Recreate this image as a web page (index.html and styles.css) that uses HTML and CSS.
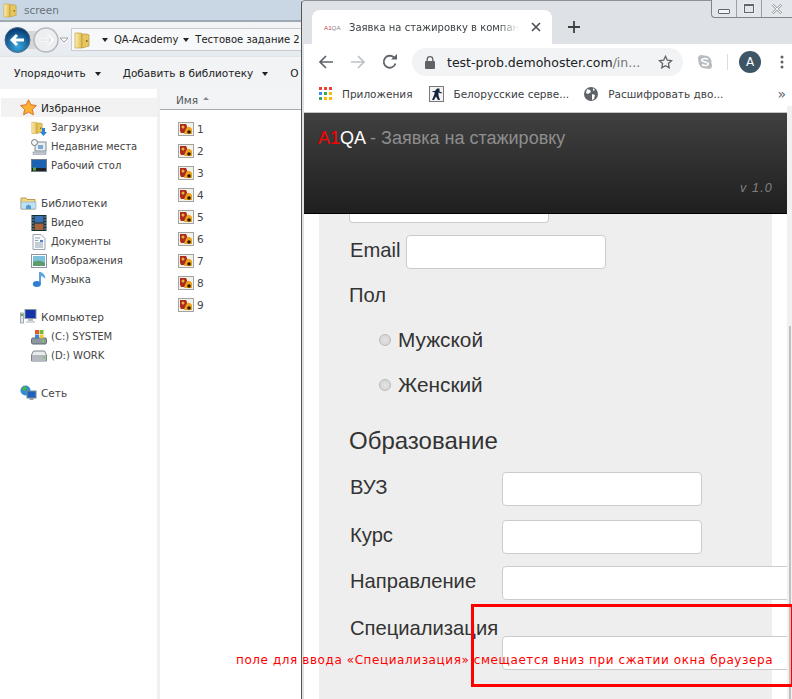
FILE: index.html
```html
<!DOCTYPE html>
<html lang="ru">
<head>
    <meta charset="UTF-8">
    <meta name="viewport" content="width=device-width, initial-scale=1.0">
    <title>Заявка на стажировку</title>
    <link rel="stylesheet" href="styles.css">
</head>
<body>

    <svg class="defs" width="0" height="0">
        <defs>
            <linearGradient id="folderFill" x1="0" y1="0" x2="1" y2="0">
                <stop offset="0" stop-color="#fdf0b0"/>
                <stop offset="1" stop-color="#dfb94f"/>
            </linearGradient>
            <symbol id="folder" viewBox="0 0 16 18">
                <path d="M1 2h6l1 1v14H1z" fill="url(#folderFill)" stroke="#c9a445" stroke-width=".7"/>
                <path d="M8 3h5l2 1v11l-7 2z" fill="#e8c65f" stroke="#b8953b" stroke-width=".7"/>
                <rect x="12" y="9" width="1.5" height="2" fill="#8a6d1f"/>
            </symbol>
            <symbol id="picfile" viewBox="0 0 16 14">
                <rect x=".5" y=".5" width="15" height="13" fill="#f1f1e8" stroke="#a3a3a3"/>
                <path d="M2 2h6l1 2v5l-3 2H3l-1-2z" fill="#b02a1c"/>
                <circle cx="5" cy="5" r="1.500" fill="#e8b23c"/>
                <path d="M9 5h3l2 2v5H6l1-3z" fill="#eba21f"/>
                <circle cx="11" cy="10" r="1.800" fill="#2c1b08"/>
            </symbol>
        </defs>
    </svg>

    <!-- Проводник -->
    <div class="explorer">
        <div class="ex-title">
            <svg width="14" height="16"><use href="#folder"/></svg>
            <span>screen</span>
        </div>
        <div class="ex-nav">
            <svg class="nav-btns" width="68" height="30" viewBox="0 0 68 30">
                <defs>
                    <radialGradient id="backFill" cx=".5" cy=".75" r=".7">
                        <stop offset="0" stop-color="#39a9e0"/>
                        <stop offset="1" stop-color="#06396f"/>
                    </radialGradient>
                </defs>
                <rect x="14" y="6" width="30" height="18" fill="#d5d7da"/>
                <circle cx="17.500" cy="15" r="12.500" fill="url(#backFill)" stroke="#4d6b8a"/>
                <path d="M24 15H12M17 10l-5 5 5 5" fill="none" stroke="#fff" stroke-width="3"/>
                <circle cx="46" cy="15" r="12" fill="#eceef0" stroke="#b4b8bc" stroke-width="1.500"/>
                <path d="M39.500 15H52M47.500 10.500L52 15l-4.500 4.500" fill="none" stroke="#fff" stroke-width="3"/>
                <path d="M39.500 15H51M47.500 11L51 15l-3.500 4" fill="none" stroke="#c8ccd0" stroke-width=".8"/>
                <path d="M60 13h8l-4 4z" fill="#fff" stroke="#8d8d8d" stroke-width=".8"/>
            </svg>
            <div class="ex-address">
                <svg width="16" height="18"><use href="#folder"/></svg>
                <span class="crumb-arrow first"></span>
                <span>QA-Academy</span>
                <span class="crumb-arrow"></span>
                <span>Тестовое задание 2</span>
            </div>
        </div>
        <div class="ex-tools">
            <span class="tool">Упорядочить<i class="crumb-arrow"></i></span>
            <span class="tool">Добавить в библиотеку<i class="crumb-arrow"></i></span>
            <span class="tool">О</span>
        </div>
        <div class="ex-main">
            <div class="ex-side">
                <div class="side-group">
                    <div class="side-row head active">
                        <svg width="17" height="17" viewBox="0 0 17 17"><path d="M8.500 .8l2.400 5 5.500.7-4 3.800 1 5.500-4.900-2.700-4.900 2.700 1-5.500-4-3.800 5.500-.7z" fill="#f9b233" stroke="#d9702a"/></svg>
                        Избранное
                    </div>
                    <div class="side-row">
                        <svg width="16" height="16" viewBox="0 0 16 16"><use href="#folder" width="12" height="15"/><path d="M11 8h3v4h2l-3.500 4L9 12h2z" fill="#2b83d8"/></svg>
                        Загрузки
                    </div>
                    <div class="side-row">
                        <svg width="16" height="16" viewBox="0 0 16 16"><rect x="4" y="3" width="11" height="9" fill="#e8edf2" stroke="#7d8a96"/><rect x="7" y="6" width="5" height="4" fill="#7fa7d1"/><circle cx="3.500" cy="3.500" r="3" fill="#f5f5f5" stroke="#777"/><rect x="2" y="13" width="13" height="2.500" fill="#c5ccd3" stroke="#7d8a96" stroke-width=".5"/></svg>
                        Недавние места
                    </div>
                    <div class="side-row">
                        <svg width="16" height="16" viewBox="0 0 16 16"><rect x=".5" y="1.500" width="15" height="12" fill="#1c62b3" stroke="#6f7f8e"/><rect x="1" y="10" width="14" height="3" fill="#222"/><rect x="2" y="9.500" width="3" height="3" fill="#57a845"/></svg>
                        Рабочий стол
                    </div>
                </div>
                <div class="side-group">
                    <div class="side-row head">
                        <svg width="17" height="16" viewBox="0 0 17 16"><path d="M1 3h5l1 1.500h8V14H1z" fill="#f1d785" stroke="#b89a48"/><path d="M1 7h15v7H1z" fill="#bfe0f3" stroke="#8aa9bf" stroke-width=".6"/><path d="M6 14v-3l2.500-1.500L11 11v3z" fill="#4f9ad4"/></svg>
                        Библиотеки
                    </div>
                    <div class="side-row">
                        <svg width="16" height="16" viewBox="0 0 15 16"><rect width="15" height="16" fill="#10303a"/><rect x="3" y="1" width="9" height="6.500" fill="#3a72b5"/><rect x="3" y="8.500" width="9" height="6.500" fill="#a9633a"/><path d="M1 2h1M1 5h1M1 8h1M1 11h1M1 14h1M13 2h1M13 5h1M13 8h1M13 11h1M13 14h1" stroke="#fff"/></svg>
                        Видео
                    </div>
                    <div class="side-row">
                        <svg width="16" height="16" viewBox="-1 0 16 16"><path d="M1 .5h8l4 4v11H1z" fill="#f8f9fb" stroke="#9aa3ad"/><path d="M3 4h5M3 6.500h3M3 9h8M3 11h8M3 13h8" stroke="#8fa0b2"/><rect x="8" y="6" width="3" height="2" fill="#4a86c5"/></svg>
                        Документы
                    </div>
                    <div class="side-row">
                        <svg width="16" height="14" viewBox="0 0 16 14"><rect x=".5" y=".5" width="15" height="13" fill="#fff" stroke="#8c97a1"/><rect x="2" y="2" width="12" height="10" fill="#7cc0dd"/><path d="M2 12V8q6-3 12 1v3z" fill="#5d9c6c"/></svg>
                        Изображения
                    </div>
                    <div class="side-row">
                        <svg width="16" height="17" viewBox="-1 0 16 17"><path d="M8 1v12" stroke="#2f7fd0" stroke-width="1.500"/><ellipse cx="4.800" cy="13" rx="4" ry="3" fill="#2f7fd0"/><path d="M8 1q5 1 5.500 7Q11 5 8 5z" fill="#5aa7e6"/></svg>
                        Музыка
                    </div>
                </div>
                <div class="side-group">
                    <div class="side-row head">
                        <svg width="17" height="15" viewBox="0 0 17 15"><rect x="5" y=".5" width="11" height="9" fill="#1433a8" stroke="#8c97a1"/><rect x="8" y="10" width="5" height="2" fill="#b7bdc3"/><rect x="6" y="12" width="9" height="2" fill="#d5d9dd"/><rect x=".5" y="4" width="3" height="10" fill="#e4e7ea" stroke="#7f8a94" stroke-width=".7"/><rect x="1" y="5" width="2" height="2" fill="#55b04a"/></svg>
                        Компьютер
                    </div>
                    <div class="side-row">
                        <svg width="16" height="16" viewBox="0 0 16 16"><rect x=".5" y="9" width="15" height="6" rx="1.500" fill="#8d979f" stroke="#5e6871"/><rect x="11" y="11" width="2" height="2" fill="#6fd04c"/><rect x="4" y="1" width="4" height="4" fill="#e4572e"/><rect x="8.500" y="1" width="4" height="4" fill="#79b63a"/><rect x="4" y="5.500" width="4" height="4" fill="#3b85d8"/><rect x="8.500" y="5.500" width="4" height="4" fill="#f2c230"/></svg>
                        (C:) SYSTEM
                    </div>
                    <div class="side-row">
                        <svg width="16" height="12" viewBox="0 0 16 12"><path d="M2.500 1h11l2 4v6H.5V5z" fill="#e9ebed" stroke="#7b848c"/><rect x="1" y="5" width="14" height="5.500" fill="#b3b9bf"/><rect x="12" y="6.500" width="2" height="2" fill="#6fd04c"/></svg>
                        (D:) WORK
                    </div>
                </div>
                <div class="side-group">
                    <div class="side-row head">
                        <svg width="17" height="16" viewBox="0 0 17 16"><circle cx="5.500" cy="5.500" r="5" fill="#2f8fd6"/><path d="M2 3l3-2 2 2-2 3-3-1zM6 8l2-1 1 2-2 2z" fill="#4fb044"/><rect x="7" y="6" width="9" height="7" fill="#1f62c0" stroke="#7b8791"/><rect x="9.500" y="13" width="4" height="2" fill="#9aa3ab"/></svg>
                        Сеть
                    </div>
                </div>
            </div>
            <div class="ex-list">
                <div class="list-head">Имя<i class="sort-up"></i></div>
                <div class="files">
                    <div class="file"><svg width="16" height="14"><use href="#picfile"/></svg>1</div>
                    <div class="file"><svg width="16" height="14"><use href="#picfile"/></svg>2</div>
                    <div class="file"><svg width="16" height="14"><use href="#picfile"/></svg>3</div>
                    <div class="file"><svg width="16" height="14"><use href="#picfile"/></svg>4</div>
                    <div class="file"><svg width="16" height="14"><use href="#picfile"/></svg>5</div>
                    <div class="file"><svg width="16" height="14"><use href="#picfile"/></svg>6</div>
                    <div class="file"><svg width="16" height="14"><use href="#picfile"/></svg>7</div>
                    <div class="file"><svg width="16" height="14"><use href="#picfile"/></svg>8</div>
                    <div class="file"><svg width="16" height="14"><use href="#picfile"/></svg>9</div>
                </div>
            </div>
        </div>
    </div>

    <!-- Браузер -->
    <div class="browser">
        <div class="win-ctrls">
            <span class="win-btn"><i class="win-min"></i></span>
            <span class="win-btn"><i class="win-max"></i></span>
            <span class="win-btn close">
                <svg width="12" height="10" viewBox="0 0 12 10"><path d="M1.500 .5L10.500 9.500M10.500 .5L1.500 9.500" stroke="#a9adb2" stroke-width="2.500"/><path d="M1.500 .5L10.500 9.500M10.500 .5L1.500 9.500" stroke="#f4f5f6" stroke-width="1"/></svg>
            </span>
        </div>
        <div class="tabstrip">
            <div class="tab">
                <span class="favicon"><b>A1</b>QA</span>
                <span class="tab-title"><span class="tab-text">Заявка на стажировку в компан</span></span>
                <svg width="10" height="10" viewBox="0 0 10 10"><path d="M1 1l8 8M9 1l-8 8" stroke="#4a4d51" stroke-width="1.600"/></svg>
            </div>
            <svg class="newtab" width="12" height="12" viewBox="0 0 12 12"><path d="M6 0v12M0 6h12" stroke="#3c4043" stroke-width="1.800"/></svg>
        </div>
        <div class="toolbar">
            <svg width="16" height="14" viewBox="0 0 16 14"><path d="M15 7H2M8 1L2 7l6 6" fill="none" stroke="#5f6368" stroke-width="1.700"/></svg>
            <svg width="16" height="14" viewBox="0 0 16 14"><path d="M1 7h13M8 1l6 6-6 6" fill="none" stroke="#bdc1c6" stroke-width="1.700"/></svg>
            <svg width="16" height="16" viewBox="0 0 16 16"><path d="M13.500 9.500A6 6 0 1 1 12 3.500" fill="none" stroke="#5f6368" stroke-width="1.800"/><path d="M9 5.500h6v-5.500z" fill="#5f6368"/></svg>
            <div class="omnibox">
                <svg width="10" height="13" viewBox="0 0 10 13"><rect y="5" width="10" height="8" rx="1" fill="#5f6368"/><path d="M2.200 5V3.500a2.800 2.800 0 0 1 5.600 0V5" fill="none" stroke="#5f6368" stroke-width="1.300"/></svg>
                <span class="url">test-prob.demohoster.com<em>/in...</em></span>
                <svg width="15" height="14" viewBox="0 0 15 14"><path d="M7.500 1.300l1.800 3.900 4.200.5-3.100 2.900.8 4.200-3.700-2.100-3.700 2.100.8-4.200L1.500 5.700l4.200-.5z" fill="none" stroke="#5f6368" stroke-width="1.300"/></svg>
            </div>
            <svg class="skype" width="16" height="16" viewBox="0 0 16 16"><circle cx="8" cy="8" r="6.500" fill="#b9bcbf"/><circle cx="4.500" cy="4.500" r="3.500" fill="#b9bcbf"/><circle cx="11.500" cy="11.500" r="3.500" fill="#b9bcbf"/><path d="M11 5.500Q8 3.500 5.500 5.200T8 8t2.700 2.800T5 10.500" fill="none" stroke="#fff" stroke-width="1.500"/></svg>
            <span class="tool-sep"></span>
            <span class="avatar">A</span>
            <svg class="menu-dots" width="4" height="14" viewBox="0 0 4 14"><circle cx="2" cy="2" r="1.500" fill="#5f6368"/><circle cx="2" cy="7" r="1.500" fill="#5f6368"/><circle cx="2" cy="12" r="1.500" fill="#5f6368"/></svg>
        </div>
        <div class="bookmarks">
            <span class="bm apps">
                <svg width="13" height="13" viewBox="0 0 13 13">
                    <path d="M0 0h3v3H0z" fill="#ea4335"/><path d="M5 0h3v3H5z" fill="#ea4335"/><path d="M10 0h3v3h-3z" fill="#ea4335"/>
                    <path d="M0 5h3v3H0z" fill="#4285f4"/><path d="M5 5h3v3H5z" fill="#34a853"/><path d="M10 5h3v3h-3z" fill="#fbbc05"/>
                    <path d="M0 10h3v3H0z" fill="#34a853"/><path d="M5 10h3v3H5z" fill="#fbbc05"/><path d="M10 10h3v3h-3z" fill="#fbbc05"/>
                </svg>
                Приложения
            </span>
            <span class="bm cs">
                <svg width="15" height="16" viewBox="0 0 15 16"><rect x=".5" y=".5" width="14" height="15" fill="#f3f3f0" stroke="#77797b"/><path d="M8 2.500h2.500v3L13 6.500l-.5 1-3-1v3L11 14H9L7 10.500 5 14H3l2.500-6V6H3.500V5H6z" fill="#14233f"/></svg>
                Белорусские серве...
            </span>
            <span class="bm">
                <svg width="14" height="14" viewBox="0 0 14 14"><circle cx="7" cy="7" r="7" fill="#5f6368"/><path d="M3 2l3 1 1 2-3 2-2-1zM8 7l3 1-1 4-2 1zM9 1l2 2-2 1z" fill="#fff"/></svg>
                Расшифровать дво...
            </span>
            <span class="bm-more">»</span>
        </div>
        <div class="viewport">
            <div class="scroll-track"><span class="scroll-thumb"></span></div>
            <div class="page-gap"></div>
            <div class="site-header">
                <div class="site-title"><span class="red">A1</span><span class="white">QA</span> - Заявка на стажировку</div>
                <div class="site-version">v 1.0</div>
            </div>
            <form class="form">
                <span class="input-cut"></span>
                <div class="row-email">
                    <label>Email</label>
                    <input class="field" type="text">
                </div>
                <div class="gender-label">Пол</div>
                <label class="radio"><input type="radio" name="sex"><span>Мужской</span></label>
                <label class="radio"><input type="radio" name="sex"><span>Женский</span></label>
                <h2 class="section">Образование</h2>
                <div class="row first"><label>ВУЗ</label><input class="field" type="text"></div>
                <div class="row"><label>Курс</label><input class="field" type="text"></div>
                <div class="row last"><label>Направление</label><input class="field wide" type="text"></div>
                <div class="row-spec"><label>Специализация</label><input class="field wide" type="text"></div>
            </form>
        </div>
    </div>

    <!-- Пометка поверх скриншота -->
    <div class="mark-box"></div>
    <div class="mark-text">поле для ввода «Специализация» смещается вниз при сжатии окна браузера</div>

</body>
</html>
```

FILE: styles.css
```css
html, body {
    margin: 0;
    height: 100%;
}
body {
    position: relative;
    width: 792px;
    height: 699px;
    overflow: hidden;
    background-color: #fff;
    font-family: "DejaVu Sans", sans-serif;
}
.defs {
    position: absolute;
}
svg {
    flex: none;
    display: block;
}

/* Проводник */
.explorer {
    position: absolute;
    left: 0;
    top: 0;
    width: 302px;
    height: 699px;
    display: flex;
    flex-direction: column;
    background-color: #fff;
    font-size: 10.5px;
    color: #333;
}
.ex-title {
    height: 20px;
    display: flex;
    align-items: center;
    gap: 7px;
    padding-left: 3px;
    background-color: #c9d7e4;
    color: #6a7178;
    font-size: 10.5px;
}
.ex-nav {
    height: 33px;
    display: flex;
    align-items: center;
    gap: 3px;
    padding: 1px 0 0 3px;
    box-sizing: content-box;
    border-top: 2px solid #9fa9b2;
    background: linear-gradient(#f3f5f7, #e6ebf0);
    border-bottom: 1px solid #dfe5ea;
}
.nav-btns {
    margin-left: -3px;
}
.ex-address {
    flex: 1;
    height: 21px;
    display: flex;
    align-items: center;
    padding-left: 2px;
    background-color: #f7f8fa;
    border: 1px solid #c8ccd0;
    border-right: none;
    color: #222;
    font-size: 10px;
    white-space: nowrap;
    overflow: hidden;
}
.crumb-arrow {
    display: inline-block;
    width: 0;
    height: 0;
    margin: 0 6px 0 5px;
    border-left: 3.5px solid transparent;
    border-right: 3.5px solid transparent;
    border-top: 4px solid #222;
}
.crumb-arrow.first {
    margin-left: 12px;
}
.ex-tools {
    height: 32px;
    display: flex;
    align-items: center;
    gap: 22px;
    padding-left: 14px;
    background-color: #f1f3f5;
    color: #222;
    white-space: nowrap;
}
.tool .crumb-arrow {
    margin: 0 0 1px 9px;
}
.ex-main {
    flex: 1;
    display: flex;
    min-height: 0;
}
.ex-side {
    width: 157px;
    padding-top: 9px;
    border-right: 3px solid #f0f0f0;
    color: #444;
    font-size: 10px;
}
.side-group {
    margin-bottom: 19px;
}
.side-row {
    height: 19px;
    box-sizing: border-box;
    display: flex;
    align-items: center;
    gap: 4px;
    padding: 2px 0 0 31px;
    white-space: nowrap;
}
.side-row.head {
    padding: 0 0 0 20px;
    gap: 4px;
    font-size: 10.5px;
}
.side-row.active {
    background-color: #f2f2f2;
    margin-left: 1px;
    padding-left: 19px;
    color: #222;
}
.ex-list {
    flex: 1;
    min-width: 0;
}
.list-head {
    height: 21px;
    box-sizing: border-box;
    display: flex;
    align-items: center;
    padding: 2px 0 0 16px;
    background-color: #f3f4f5;
    border-bottom: 1px solid #a9a9a9;
    color: #555;
}
.sort-up {
    width: 0;
    height: 0;
    margin-left: 5px;
    margin-bottom: 3px;
    border-left: 3px solid transparent;
    border-right: 3px solid transparent;
    border-bottom: 3px solid #888;
}
.files {
    padding: 8px 0 0 18px;
}
.file {
    height: 22px;
    display: flex;
    align-items: center;
    gap: 3px;
    color: #444;
}

/* Браузер */
.browser {
    position: absolute;
    left: 301px;
    top: 0;
    width: 491px;
    height: 699px;
    display: flex;
    flex-direction: column;
    box-sizing: border-box;
    border-left: 1px solid #555;
    border-top: 1px solid #8d9298;
    border-top-left-radius: 4px;
    background-color: #dee1e6;
    padding-left: 2px;
    color: #222;
}
.win-ctrls {
    position: absolute;
    top: -1px;
    right: 0;
    width: 81px;
    height: 18px;
    display: flex;
    box-sizing: border-box;
    border: 1px solid #7e858c;
    border-top: none;
    border-right: none;
    border-bottom-left-radius: 4px;
    background-color: #e3e6ea;
}
.win-btn {
    width: 24px;
    display: flex;
    align-items: center;
    justify-content: center;
    border-right: 1px solid #9aa1a8;
}
.win-btn.close {
    flex: 1;
    border-right: none;
}
.win-min {
    width: 10px;
    height: 3px;
    margin-top: 5px;
    background-color: #f4f5f6;
    border: 1px solid #5f666d;
    border-radius: 1px;
}
.win-max {
    width: 8px;
    height: 6px;
    border: 1px solid #5f666d;
    border-top-width: 2px;
    outline: 1px solid #eef0f2;
    background-color: #e3e6ea;
}
.tabstrip {
    height: 43px;
    display: flex;
    align-items: flex-end;
}
.tab {
    width: 240px;
    height: 34px;
    margin-left: 8px;
    box-sizing: border-box;
    display: flex;
    align-items: center;
    padding: 0 11px 0 12px;
    background-color: #fff;
    border-radius: 8px 8px 0 0;
}
.favicon {
    width: 25px;
    flex: none;
    font-family: "Liberation Sans", sans-serif;
    font-size: 6.2px;
    color: #888;
}
.favicon b {
    font-weight: normal;
    color: #c2434a;
}
.tab-title {
    flex: 1;
    white-space: nowrap;
    font-size: 10px;
    color: #3c4043;
}
.tab-text {
    display: inline-block;
    -webkit-mask-image: linear-gradient(to right, #000 88%, transparent);
    mask-image: linear-gradient(to right, #000 88%, transparent);
}
.newtab {
    margin: 0 0 11px 16px;
}
.toolbar {
    height: 34px;
    box-sizing: border-box;
    display: flex;
    align-items: center;
    padding: 2px 0 0 14px;
    gap: 16px;
    background-color: #fff;
}
.omnibox {
    width: 271px;
    height: 28px;
    flex: none;
    margin-left: -2px;
    box-sizing: border-box;
    display: flex;
    align-items: center;
    padding: 0 10px 0 13px;
    border-radius: 14px;
    background-color: #f1f3f4;
}
.url {
    flex: 1;
    margin-left: 12px;
    font-size: 12.5px;
    white-space: nowrap;
    color: #202124;
}
.url em {
    font-style: normal;
    color: #70757a;
}
.skype {
    margin-left: -2px;
}
.tool-sep {
    width: 1px;
    height: 16px;
    flex: none;
    margin-left: -2px;
    background-color: #dadce0;
}
.avatar {
    width: 22px;
    height: 22px;
    flex: none;
    margin-left: -5px;
    border-radius: 50%;
    background-color: #3d5564;
    color: #fff;
    font-size: 12px;
    text-align: center;
    line-height: 22px;
}
.menu-dots {
    margin-left: 3px;
}
.bookmarks {
    height: 28px;
    box-sizing: border-box;
    display: flex;
    align-items: center;
    padding: 3px 0 0 15px;
    background-color: #fff;
    font-size: 10.5px;
    color: #3c4043;
    white-space: nowrap;
}
.bm {
    display: flex;
    align-items: center;
    gap: 10px;
    margin-right: 15px;
}
.bm.apps {
    margin-right: 17px;
}
.bm.cs {
    gap: 9px;
}
.bm-more {
    margin-left: auto;
    margin-right: 6px;
    font-size: 14px;
    color: #5f6368;
}
.viewport {
    flex: 1;
    position: relative;
    min-height: 0;
    overflow: hidden;
    background-color: #fff;
}
.scroll-track {
    position: absolute;
    right: 0;
    top: 0;
    bottom: 0;
    width: 5px;
    background-color: #f1f1f1;
}
.scroll-thumb {
    position: absolute;
    left: 2px;
    right: 1px;
    top: 220px;
    bottom: 0;
    background-color: #c1c1c1;
}
.page-gap {
    height: 6px;
    border-bottom: 1px solid #c4c4c4;
}
.site-header {
    position: relative;
    height: 100px;
    margin-right: 5px;
    background: linear-gradient(#404040, #1f1f1f);
    border-bottom: 1px solid #000;
    font-family: "Liberation Sans", Arial, sans-serif;
}
.site-title {
    padding: 15px 0 0 14px;
    font-size: 18px;
    line-height: 21px;
    color: #8e8e8e;
}
.red {
    color: #f00;
}
.white {
    color: #fff;
}
.site-version {
    position: absolute;
    right: 14px;
    bottom: 18px;
    font-size: 12.5px;
    font-style: italic;
    letter-spacing: 1.2px;
    color: #808080;
}

/* Форма */
.form {
    width: 423px;
    height: 600px;
    margin-left: 15px;
    padding-left: 30px;
    background-color: #eee;
    font-family: "Liberation Sans", Arial, sans-serif;
    font-size: 20.2px;
    color: #333;
}
.input-cut {
    display: block;
    width: 198px;
    height: 8px;
    background-color: #fff;
    border: 1px solid #ccc;
    border-top: none;
    border-radius: 0 0 4px 4px;
}
.field {
    width: 198px;
    height: 32px;
    padding: 0;
    flex: none;
    background-color: #fff;
    border: 1px solid #ccc;
    border-radius: 4px;
}
.field.wide {
    width: 298px;
}
.row-email {
    display: flex;
    align-items: center;
    gap: 6px;
    margin: 12px 0 0 1px;
}
.row-email label {
    padding-bottom: 4px;
}
.gender-label {
    margin-top: 15px;
    line-height: 23px;
}
.radio {
    display: flex;
    align-items: center;
    height: 23px;
    margin: 22px 0 0 30px;
    gap: 7px;
    font-size: 20.8px;
}
.gender-label + .radio {
    margin-top: 21px;
}
.radio input {
    appearance: none;
    width: 12px;
    height: 12px;
    margin: 0;
    border: 1px solid #bbb;
    border-radius: 50%;
    background: radial-gradient(#e4e4e4, #d0d0d0);
    box-sizing: border-box;
}
.section {
    margin: 31px 0 0;
    font-size: 24px;
    line-height: 28px;
    font-weight: normal;
}
.row {
    display: flex;
    align-items: center;
    height: 34px;
    margin: 14px 0 0 1px;
}
.row.first {
    margin-top: 17px;
}
.row.last {
    margin-top: 12px;
}
.row label {
    width: 152px;
    flex: none;
    padding-bottom: 4px;
}
.row-spec {
    margin: 17px 0 0 1px;
}
.row-spec label {
    display: block;
    line-height: 23px;
    margin-bottom: -4px;
}
.row-spec .field {
    display: block;
    margin: 0 0 0 152px;
}

/* Пометка */
.mark-box {
    position: absolute;
    left: 471px;
    top: 604px;
    width: 321px;
    height: 83px;
    box-sizing: border-box;
    border: 3px solid #f00;
    border-right: 1px solid #f00;
}
.mark-text {
    position: absolute;
    left: 236px;
    top: 652px;
    font-size: 12px;
    line-height: 16px;
    letter-spacing: .58px;
    color: #f00;
    white-space: nowrap;
}
```
